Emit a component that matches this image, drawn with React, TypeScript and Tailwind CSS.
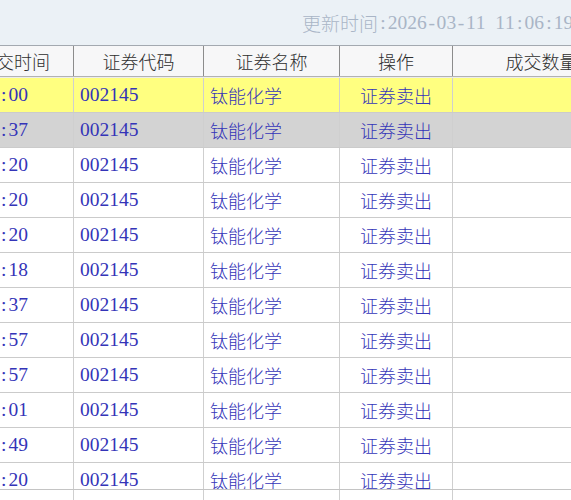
import React from "react";

const cjk = { fontFamily: "'Noto Sans CJK SC', sans-serif" };
const serif = { fontFamily: "'Liberation Serif', 'Noto Sans CJK SC', serif" };

const times = [
  "10:58:00",
  "10:57:37",
  "10:56:20",
  "10:55:20",
  "10:54:20",
  "10:53:18",
  "10:52:37",
  "10:51:57",
  "10:50:57",
  "10:50:01",
  "10:49:49",
  "10:48:20",
];

function Mono({ text }: { text: string }) {
  return (
    <span style={serif} className="text-[19.5px] leading-none whitespace-nowrap inline-flex">
      {text.split("").map((c, i) => (
        <span key={i} className="inline-block w-[9.78px] text-center">
          {c === " " ? "\u00a0" : c}
        </span>
      ))}
    </span>
  );
}

export default function App() {
  return (
    <div className="w-[571px] h-[500px] overflow-hidden bg-white flex flex-col">
      {/* top bar */}
      <div className="h-[45px] shrink-0 bg-[#ebf1f6] flex items-center pl-[302px] whitespace-nowrap text-[#a9b5c6]">
        <span style={cjk} className="text-[19px] leading-none font-light">更新时间</span>
        <Mono text=":2026-03-11 11:06:19" />
      </div>

      <div className="flex-1 overflow-hidden flex flex-col">
        <div className="ml-[-45px] w-[700px] flex flex-col h-full">
          {/* header */}
          <div
            style={cjk}
            className="h-[32px] shrink-0 flex bg-[#f7f7f8] border-t border-t-[#a3a9b0] border-b border-b-[#b2b2b2] text-[18px] font-light text-[#2e2e2e] shadow-[0_1px_0_#ececec]"
          >
            <div className="w-[119px] border-r border-r-[#8c8c8c] flex items-center justify-center whitespace-nowrap">成交时间</div>
            <div className="w-[130px] border-r border-r-[#8c8c8c] flex items-center justify-center">证券代码</div>
            <div className="w-[136px] border-r border-r-[#8c8c8c] flex items-center justify-center">证券名称</div>
            <div className="w-[113px] border-r border-r-[#8c8c8c] flex items-center justify-center">操作</div>
            <div className="w-[178px] border-r border-r-[#8c8c8c] flex items-center justify-center">成交数量</div>
          </div>
          <div className="h-[1px] shrink-0" />

          {/* body */}
          <div className="h-[411px] shrink-0 overflow-hidden flex flex-col">
            {times.map((t, i) => (
              <div
                key={i}
                className={
                  "h-[35px] shrink-0 flex border-b border-b-[#cbcbcb] text-[#3434b8] " +
                  (i === 0 ? "bg-[#ffff80]" : i === 1 ? "bg-[#d3d3d3]" : "bg-white")
                }
              >
                <div className="w-[119px] border-r border-r-[#cfcfcf] flex items-center justify-end pr-[45px]">
                  <Mono text={t} />
                </div>
                <div
                  style={serif}
                  className="w-[130px] border-r border-r-[#cfcfcf] flex items-center pl-[6px] text-[19.5px]"
                >
                  002145
                </div>
                <div
                  style={cjk}
                  className="w-[136px] border-r border-r-[#cfcfcf] flex items-center pl-[6px] text-[18px] font-light"
                >
                  钛能化学
                </div>
                <div
                  style={cjk}
                  className="w-[113px] border-r border-r-[#cfcfcf] flex items-center justify-center text-[18px] font-light"
                >
                  证券卖出
                </div>
                <div className="w-[178px] border-r border-r-[#cfcfcf]" />
              </div>
            ))}
          </div>

          {/* footer */}
          <div className="flex-1 flex border-t border-t-[#c4c4c4] bg-white">
            <div className="w-[119px] border-r border-r-[#cfcfcf]" />
            <div className="w-[130px] border-r border-r-[#cfcfcf]" />
            <div className="w-[136px] border-r border-r-[#cfcfcf]" />
            <div className="w-[113px] border-r border-r-[#cfcfcf]" />
            <div className="w-[178px] border-r border-r-[#cfcfcf]" />
          </div>
        </div>
      </div>
    </div>
  );
}
